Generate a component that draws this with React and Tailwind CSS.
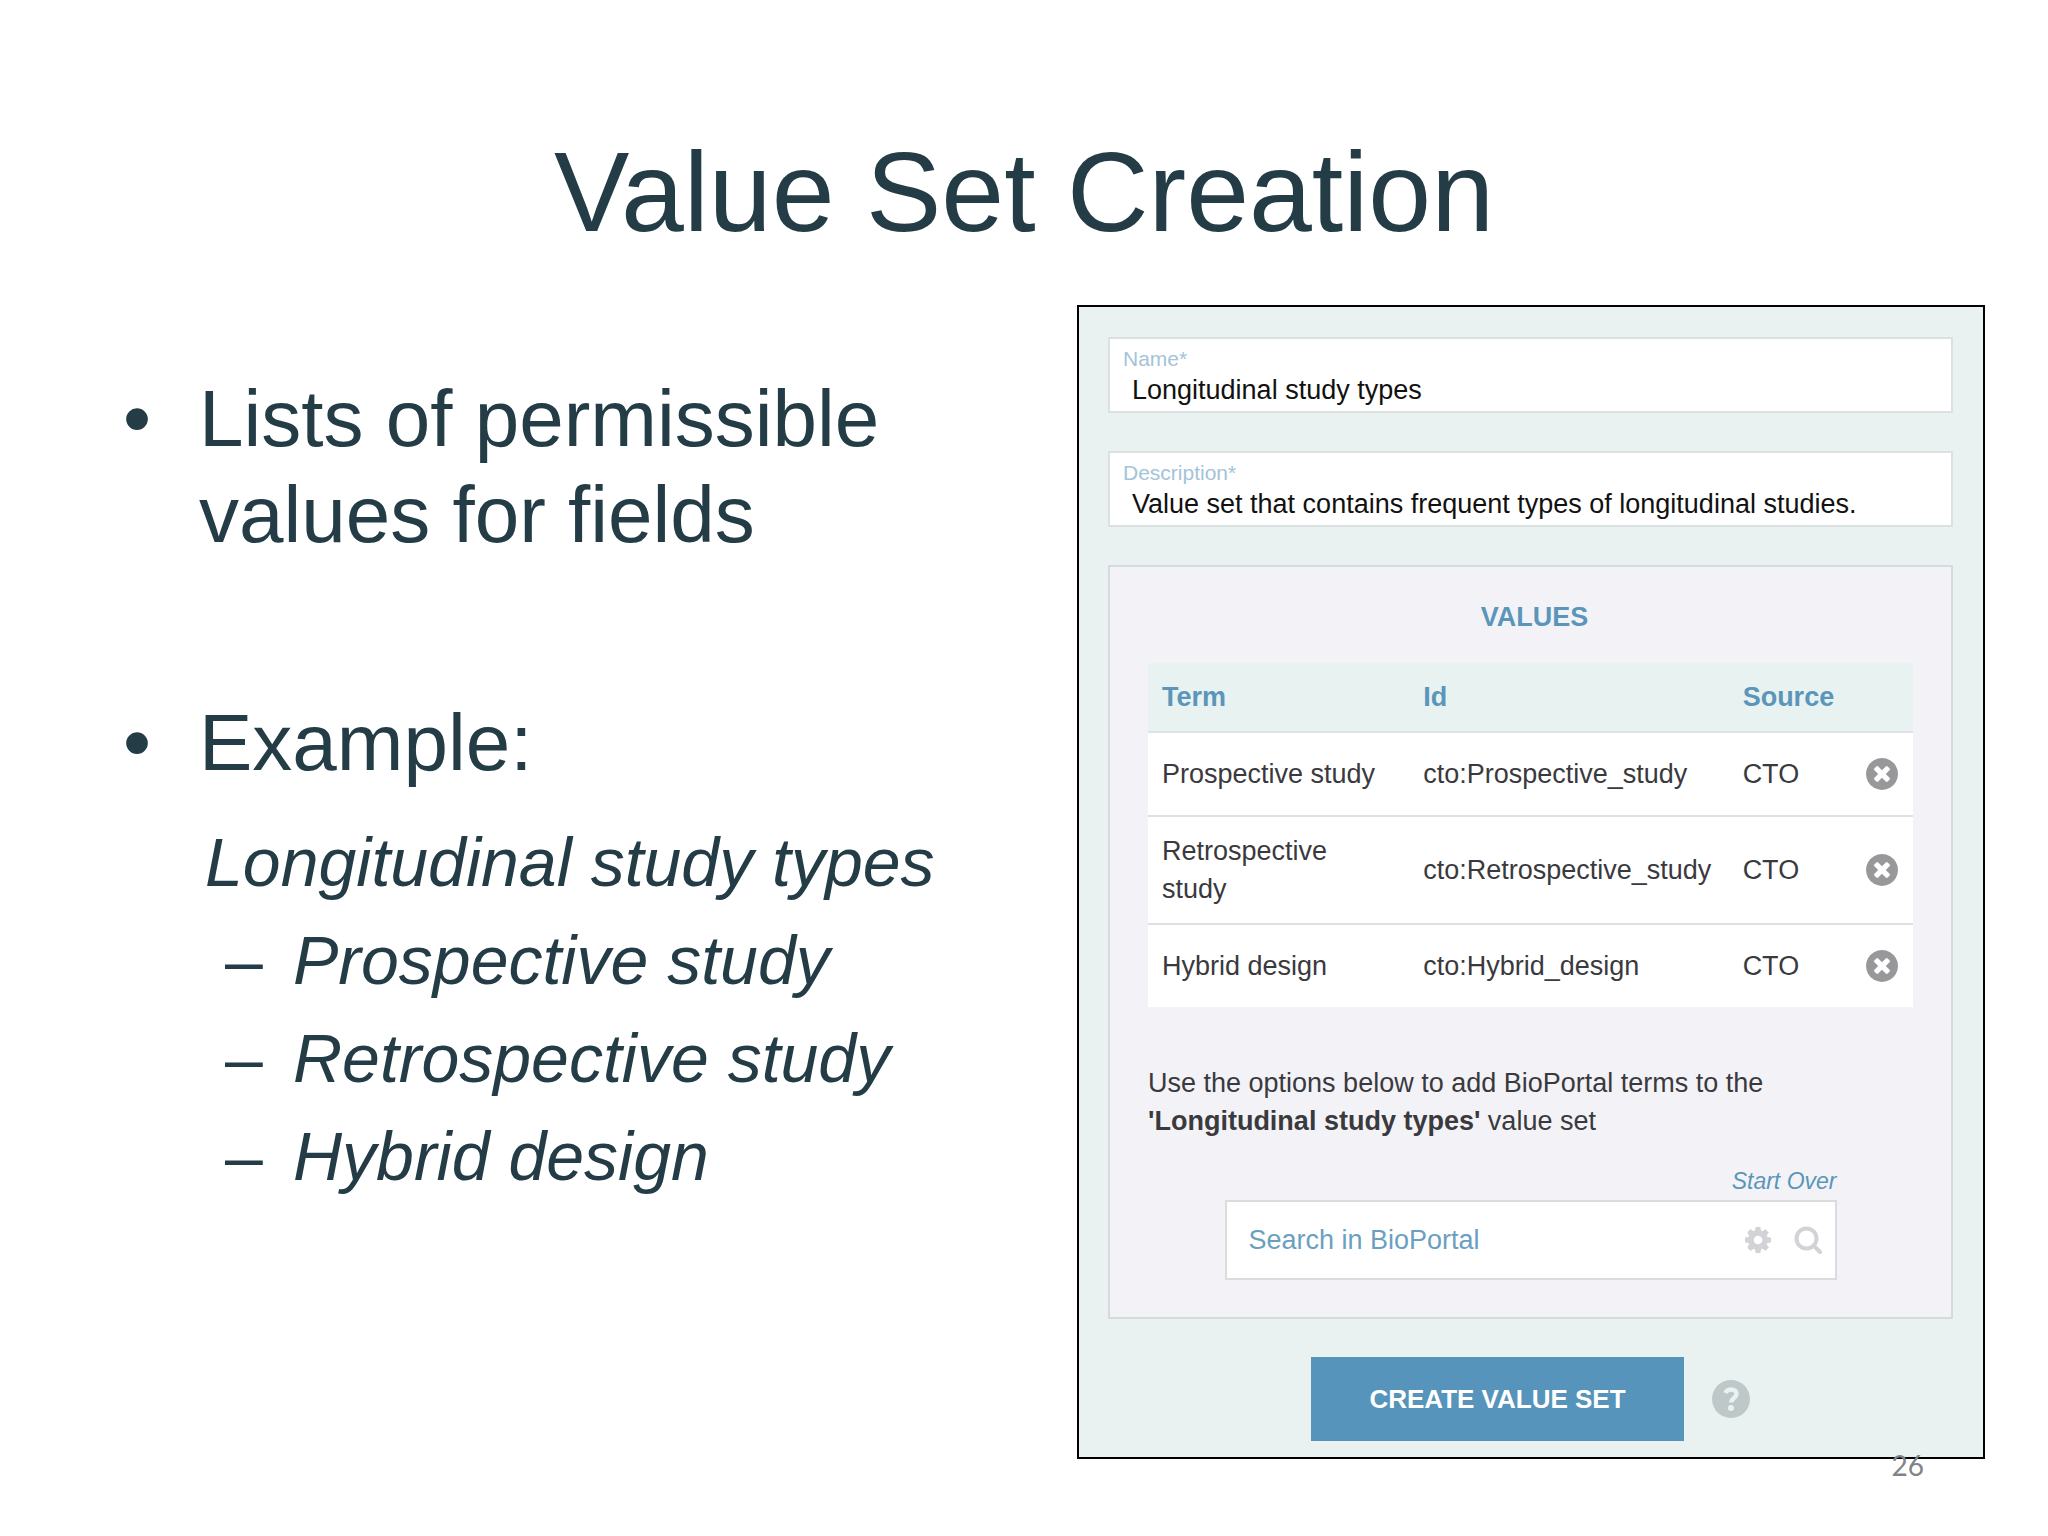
import { useState } from "react"

const examples = ["Prospective study", "Retrospective study", "Hybrid design"]

const initialValues = [
  { term: "Prospective study", id: "cto:Prospective_study", source: "CTO" },
  { term: "Retrospective study", id: "cto:Retrospective_study", source: "CTO" },
  { term: "Hybrid design", id: "cto:Hybrid_design", source: "CTO" },
]

function RemoveIcon() {
  return (
    <svg viewBox="128 128 1536 1536" className="size-8" fill="currentColor" aria-hidden="true">
      <path d="M1277 1122q0-26-19-45l-181-181 181-181q19-19 19-45 0-27-19-46l-90-90q-19-19-46-19-26 0-45 19l-181 181-181-181q-19-19-45-19-27 0-46 19l-90 90q-19 19-19 46 0 26 19 45l181 181-181 181q-19 19-19 45 0 27 19 46l90 90q19 19 46 19 26 0 45-19l181-181 181 181q19 19 45 19 27 0 46-19l90-90q19-19 19-46zm387-226q0 209-103 385.5t-279.5 279.5-385.5 103-385.5-103-279.5-279.5-103-385.5 103-385.5 279.5-279.5 385.5-103 385.5 103 279.5 279.5 103 385.5z" />
    </svg>
  )
}

function CogIcon() {
  return (
    <svg viewBox="128 128 1536 1536" className="size-[26px]" fill="currentColor" aria-hidden="true">
      <path d="M1152 896q0-106-75-181t-181-75-181 75-75 181 75 181 181 75 181-75 75-181zm512-109v222q0 12-8 23t-20 13l-185 28q-19 54-39 91 35 50 107 138 10 12 10 25t-9 23q-27 37-99 108t-94 71q-12 0-26-9l-138-108q-44 23-91 38-16 136-29 186-7 28-36 28h-222q-14 0-24.5-8.5t-11.5-21.5l-28-184q-49-16-90-37l-141 107q-10 9-25 9-14 0-25-11-126-114-165-168-7-10-7-23 0-12 8-23 15-21 51-66.5t54-70.5q-27-50-41-99l-183-27q-13-2-21-12.5t-8-23.5v-222q0-12 8-23t19-13l186-28q14-46 39-92-40-57-107-138-10-12-10-24 0-10 9-23 26-36 98.5-107.5t94.5-71.5q13 0 26 10l138 107q44-23 91-38 16-136 29-186 7-28 36-28h222q14 0 24.5 8.5t11.5 21.5l28 184q49 16 90 37l142-107q9-9 24-9 13 0 25 10 129 119 165 170 7 8 7 22 0 12-8 23-15 21-51 66.5t-54 70.5q26 50 41 98l183 28q13 2 21 12.5t8 23.5z" />
    </svg>
  )
}

function SearchIcon() {
  return (
    <svg viewBox="0 0 28 28" className="size-7" fill="none" stroke="currentColor" strokeWidth="4" aria-hidden="true">
      <circle cx="12.5" cy="12.5" r="10" />
      <path d="M19.5 19.5l6.500 6.500" strokeLinecap="round" />
    </svg>
  )
}

function HelpIcon() {
  return (
    <svg viewBox="0 0 38 38" className="size-[38px]" fill="none" aria-hidden="true">
      <circle cx="19" cy="19" r="19" fill="#bfc8c8" />
      <path d="M13.500 13c1-2.500 3-3.500 5.500-3.500 3.500 0 5.500 2 5.500 4.500 0 4-5.500 4.500-5.500 8.500" stroke="#e9f2f1" strokeWidth="4.500" />
      <circle cx="19" cy="28" r="3" fill="#e9f2f1" />
    </svg>
  )
}

function TextField({ id, label, value, onChange }) {
  return (
    <div className="border-2 border-[#dbe1e2] bg-white pt-2 pr-3 pb-[6px] pl-[13px]">
      <label htmlFor={id} className="block text-[21px] leading-6 text-[#a3c4d8]">{label}</label>
      <input
        id={id}
        type="text"
        value={value}
        onChange={(e) => onChange(e.target.value)}
        className="mt-1 block h-[30px] w-full bg-transparent pl-[9px] text-[27px] leading-[30px] text-[#111111] outline-none"
      />
    </div>
  )
}

function ValuesTable({ values, onRemove }) {
  return (
    <table className="mt-[31px] w-full table-fixed border-separate border-spacing-0 bg-white text-left leading-[38px]">
      <thead className="bg-[#e7f2f1] text-[#5b96ba]">
        <tr className="h-[70px]">
          <th className="w-[34.4%] border-b-2 border-[#dfe2e8] pl-[14px] font-bold">Term</th>
          <th className="w-[41.5%] border-b-2 border-[#dfe2e8] pl-3 font-bold">Id</th>
          <th className="w-[16.4%] border-b-2 border-[#dfe2e8] pl-[14px] font-bold">Source</th>
          <th className="border-b-2 border-[#dfe2e8]"></th>
        </tr>
      </thead>
      <tbody className="[&>tr:not(:last-child)>td]:border-b-2 [&>tr>td]:border-[#dfdfe5]">
        {values.map((v) => (
          <tr key={v.id} className="h-[84px] last:h-[82px]">
            <td className="py-[15px] pr-6 pl-[14px]">{v.term}</td>
            <td className="pl-3">{v.id}</td>
            <td className="pl-[14px]">{v.source}</td>
            <td className="pl-3">
              <button type="button" aria-label={`Remove ${v.term}`} onClick={() => onRemove(v.id)} className="block text-[#98979a]">
                <RemoveIcon />
              </button>
            </td>
          </tr>
        ))}
      </tbody>
    </table>
  )
}

function ValueSetForm() {
  const [name, setName] = useState("Longitudinal study types")
  const [description, setDescription] = useState("Value set that contains frequent types of longitudinal studies.")
  const [values, setValues] = useState(initialValues)
  const [search, setSearch] = useState("")

  return (
    <form
      onSubmit={(e) => e.preventDefault()}
      className="flex flex-col gap-[38px] border-2 border-black bg-[#e9f2f1] pt-[30px] pr-[30px] pb-4 pl-[29px] text-[27px] text-[#3a3a3e]"
    >
      <TextField id="name" label="Name*" value={name} onChange={setName} />
      <TextField id="description" label="Description*" value={description} onChange={setDescription} />

      <section className="border-2 border-[#d5dadc] bg-[#f3f3f7] px-[38px] pt-[35px] pb-[37px]">
        <h2 className="pl-2 text-center leading-[30px] font-bold text-[#5b96ba]">VALUES</h2>
        <ValuesTable values={values} onRemove={(id) => setValues(values.filter((v) => v.id !== id))} />

        <p className="mt-[57px] leading-[38px]">
          Use the options below to add BioPortal terms to the <b>'Longitudinal study types'</b> value set
        </p>

        <div className="mx-[10%] mt-[26px]">
          <div className="flex justify-end">
            <a href="#start" onClick={() => setSearch("")} className="text-[23px] leading-[30px] text-[#5b96ba] italic">Start Over</a>
          </div>
          <div className="mt-1 flex h-20 items-center border-2 border-[#dcdce0] bg-white pr-[13px] pl-[22px] text-[#d3d3d7]">
            <input
              type="text"
              aria-label="Search in BioPortal"
              placeholder="Search in BioPortal"
              value={search}
              onChange={(e) => setSearch(e.target.value)}
              className="h-[38px] min-w-0 flex-1 bg-transparent text-[#5b96ba] outline-none placeholder:text-[#6b9fc0]"
            />
            <button type="button" aria-label="Search options"><CogIcon /></button>
            <button type="button" aria-label="Search" className="ml-[23px]"><SearchIcon /></button>
          </div>
        </div>
      </section>

      <div className="flex items-center justify-center gap-7">
        <button type="submit" className="h-[84px] bg-[#5694bb] px-[58px] text-[26px] font-bold text-white">CREATE VALUE SET</button>
        <button type="button" aria-label="Help"><HelpIcon /></button>
      </div>
    </form>
  )
}

export default function App() {
  return (
    <main className="min-h-screen bg-white font-['Liberation_Sans',Arial,sans-serif] text-[#243c46]">
      <h1 className="pt-[132px] text-center text-[113px] leading-[120px]">Value Set Creation</h1>

      <div className="mt-[53px] grid grid-cols-[954fr_908fr] items-start pr-[63px] pl-[123px]">
        <ul className="pt-[66px] text-[80px] leading-24">
          <li className="flex">
            <span className="w-[76px] shrink-0">•</span>
            <span className="max-w-[700px]">Lists of permissible values for fields</span>
          </li>
          <li className="mt-[132px] flex">
            <span className="w-[76px] shrink-0">•</span>
            <div>
              <p>Example:</p>
              <p className="mt-[22px] pl-[6px] text-[68px] leading-[98px] italic">Longitudinal study types</p>
              <ul className="pl-[26px] text-[68px] leading-[98px]">
                {examples.map((item) => (
                  <li key={item} className="flex">
                    <span className="w-[68px] shrink-0">–</span>
                    <i>{item}</i>
                  </li>
                ))}
              </ul>
            </div>
          </li>
        </ul>

        <ValueSetForm />
      </div>

      <footer className="-mt-[10px] pr-[124px] text-right font-[Lato,sans-serif] text-[28px] leading-8 text-[#808488]">26</footer>
    </main>
  )
}
